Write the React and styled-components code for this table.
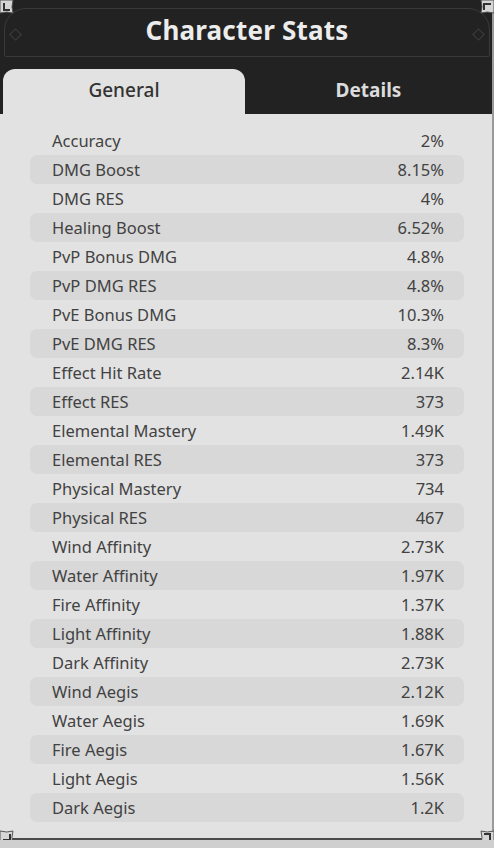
import React, { useState } from "react";
import styled, { createGlobalStyle } from "styled-components";

const GlobalStyle = createGlobalStyle`
  body {
    margin: 0;
    background: #cfcfcf;
    font-family: "Noto Sans", "Open Sans", sans-serif;
  }
`;

const stats = [
  ["Accuracy", "2%"],
  ["DMG Boost", "8.15%"],
  ["DMG RES", "4%"],
  ["Healing Boost", "6.52%"],
  ["PvP Bonus DMG", "4.8%"],
  ["PvP DMG RES", "4.8%"],
  ["PvE Bonus DMG", "10.3%"],
  ["PvE DMG RES", "8.3%"],
  ["Effect Hit Rate", "2.14K"],
  ["Effect RES", "373"],
  ["Elemental Mastery", "1.49K"],
  ["Elemental RES", "373"],
  ["Physical Mastery", "734"],
  ["Physical RES", "467"],
  ["Wind Affinity", "2.73K"],
  ["Water Affinity", "1.97K"],
  ["Fire Affinity", "1.37K"],
  ["Light Affinity", "1.88K"],
  ["Dark Affinity", "2.73K"],
  ["Wind Aegis", "2.12K"],
  ["Water Aegis", "1.69K"],
  ["Fire Aegis", "1.67K"],
  ["Light Aegis", "1.56K"],
  ["Dark Aegis", "1.2K"],
];

const Frame = styled.div`
  position: relative;
  width: 494px;
  height: 840px;
  background: #e2e2e2;
  border-right: 2px solid #9a9a9a;
  border-bottom: 2px solid #4a4a4a;
  box-sizing: border-box;
  display: flex;
  flex-direction: column;
`;

const Header = styled.div`
  background: #222222;
  padding: 8px 0 0;
  display: flex;
  flex-direction: column;
`;

const TitleBox = styled.div`
  position: relative;
  height: 49px;
  margin: 0 2px 0 4px;
  padding-bottom: 5px;
  border: 1px solid #3a3a3a;
  border-radius: 22px 22px 2px 2px;
  display: flex;
  align-items: center;
  justify-content: center;
  box-sizing: border-box;
`;

const Diamond = styled.span`
  position: absolute;
  top: 21px;
  ${(p) => (p.side === "left" ? "left: 6px;" : "right: 6px;")}
  width: 7px;
  height: 7px;
  border: 1px solid #3e3e3e;
  transform: rotate(45deg);
`;

const Title = styled.h1`
  margin: 0;
  font-size: 26px;
  font-weight: 700;
  color: #ececec;
  letter-spacing: 0.2px;
`;

const Tabs = styled.div`
  display: flex;
  margin-top: 12px;
  padding-left: 3px;
`;

const Tab = styled.button`
  width: ${(p) => (p.active ? "242px" : "auto")};
  flex: ${(p) => (p.active ? "none" : "1")};
  height: 45px;
  border: none;
  border-radius: 12px 12px 0 0;
  background: ${(p) => (p.active ? "#e2e2e2" : "transparent")};
  color: ${(p) => (p.active ? "#333" : "#dcdcdc")};
  font-family: inherit;
  font-size: 19px;
  font-weight: ${(p) => (p.active ? 500 : 700)};
  padding: 0 0 4px;
  cursor: pointer;
`;

const List = styled.div`
  padding: 12px 28px 0 30px;
  display: flex;
  flex-direction: column;
`;

const Row = styled.div`
  height: 29px;
  display: flex;
  align-items: center;
  justify-content: space-between;
  padding: 0 20px 0 22px;
  border-radius: 7px;
  background: ${(p) => (p.shaded ? "#d8d8d8" : "transparent")};
  font-size: 16.5px;
  color: #424242;
`;

const Corner = styled.svg`
  position: absolute;
  width: 14px;
  height: 14px;
  ${(p) => p.pos}
`;

const CornerMark = ({ pos, rot }) => (
  <Corner pos={pos} viewBox="0 0 14 14">
    <g transform={`rotate(${rot} 7 7)`}>
      <path d="M0 0 H13 Q11 7 13 13 Q7 11 0 13 Z" fill="#d6d6d6" stroke="#555" strokeWidth="1" />
      <path d="M4 3 V10 H10" fill="none" stroke="#333" strokeWidth="2" />
    </g>
  </Corner>
);

export default function App() {
  const [tab, setTab] = useState("general");
  return (
    <>
      <GlobalStyle />
      <Frame>
        <Header>
          <TitleBox>
            <Diamond side="left" />
            <Title>Character Stats</Title>
            <Diamond side="right" />
          </TitleBox>
          <Tabs>
            <Tab active={tab === "general"} onClick={() => setTab("general")}>
              General
            </Tab>
            <Tab active={tab === "details"} onClick={() => setTab("details")}>
              Details
            </Tab>
          </Tabs>
        </Header>
        <List>
          {stats.map(([label, value], i) => (
            <Row key={label} shaded={i % 2 === 1}>
              <span>{label}</span>
              <span>{value}</span>
            </Row>
          ))}
        </List>
        <CornerMark pos="top: 0; left: 0;" rot={0} />
        <CornerMark pos="top: 0; right: -2px;" rot={90} />
        <CornerMark pos="bottom: -6px; left: 0;" rot={270} />
        <CornerMark pos="bottom: -6px; right: -2px;" rot={180} />
      </Frame>
    </>
  );
}
